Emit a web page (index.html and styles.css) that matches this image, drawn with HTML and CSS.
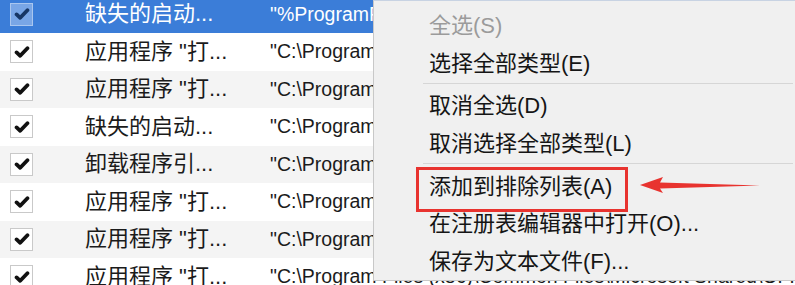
FILE: index.html
```html
<!DOCTYPE html>
<html lang="zh-CN">
<head>
<meta charset="utf-8">
<title>Context menu</title>
<link rel="stylesheet" href="styles.css">
</head>
<body>
<div class="screen">
  <div class="list">
    <div class="row selected">
      <span class="cb"><svg viewBox="0 0 16 16" width="16" height="16"><path d="M2.6 8.4 L6.2 11.8 L13.4 4.2" /></svg></span>
      <span class="name">缺失的启动...</span>
      <span class="cmd">"%ProgramFiles%\Common Files\System\uninstall.exe"</span>
    </div>
    <div class="row">
      <span class="cb"><svg viewBox="0 0 16 16" width="16" height="16"><path d="M2.6 8.4 L6.2 11.8 L13.4 4.2" /></svg></span>
      <span class="name">应用程序 "打...</span>
      <span class="cmd">"C:\Program Files (x86)\Common Files\app.exe"</span>
    </div>
    <div class="row alt">
      <span class="cb"><svg viewBox="0 0 16 16" width="16" height="16"><path d="M2.6 8.4 L6.2 11.8 L13.4 4.2" /></svg></span>
      <span class="name">应用程序 "打...</span>
      <span class="cmd">"C:\Program Files (x86)\Common Files\app.exe"</span>
    </div>
    <div class="row">
      <span class="cb"><svg viewBox="0 0 16 16" width="16" height="16"><path d="M2.6 8.4 L6.2 11.8 L13.4 4.2" /></svg></span>
      <span class="name">缺失的启动...</span>
      <span class="cmd">"C:\Program Files (x86)\Common Files\app.exe"</span>
    </div>
    <div class="row alt">
      <span class="cb"><svg viewBox="0 0 16 16" width="16" height="16"><path d="M2.6 8.4 L6.2 11.8 L13.4 4.2" /></svg></span>
      <span class="name">卸载程序引...</span>
      <span class="cmd">"C:\Program Files (x86)\Common Files\app.exe"</span>
    </div>
    <div class="row">
      <span class="cb"><svg viewBox="0 0 16 16" width="16" height="16"><path d="M2.6 8.4 L6.2 11.8 L13.4 4.2" /></svg></span>
      <span class="name">应用程序 "打...</span>
      <span class="cmd">"C:\Program Files (x86)\Common Files\app.exe"</span>
    </div>
    <div class="row alt">
      <span class="cb"><svg viewBox="0 0 16 16" width="16" height="16"><path d="M2.6 8.4 L6.2 11.8 L13.4 4.2" /></svg></span>
      <span class="name">应用程序 "打...</span>
      <span class="cmd">"C:\Program Files (x86)\Common Files\app.exe"</span>
    </div>
    <div class="row">
      <span class="cb"><svg viewBox="0 0 16 16" width="16" height="16"><path d="M2.6 8.4 L6.2 11.8 L13.4 4.2" /></svg></span>
      <span class="name">应用程序 "打...</span>
      <span class="cmd">"C:\Program Files (x86)\Common Files\Microsoft Shared\OFFICE16\app.exe"</span>
    </div>
  </div>

  <div class="menu">
    <div class="item disabled">全选(S)</div>
    <div class="item">选择全部类型(E)</div>
    <div class="sep"></div>
    <div class="item">取消全选(D)</div>
    <div class="item">取消选择全部类型(L)</div>
    <div class="sep"></div>
    <div class="item">添加到排除列表(A)</div>
    <div class="item">在注册表编辑器中打开(O)...</div>
    <div class="item">保存为文本文件(F)...</div>

    <div class="highlight"></div>
    <svg class="arrow" viewBox="0 0 130 20" width="130" height="20">
      <polygon points="0,9 23,1 20,6.5 120,9.5 20,12.5 23,17" fill="#e8332f" />
    </svg>
  </div>
</div>
</body>
</html>
```

FILE: styles.css
```css
* { box-sizing: border-box; }

html, body {
  margin: 0;
  padding: 0;
  width: 795px;
  height: 285px;
  overflow: hidden;
  background: #ffffff;
}

.screen {
  position: relative;
  width: 795px;
  height: 285px;
  overflow: hidden;
  font-family: "Liberation Sans", "Noto Sans CJK SC", sans-serif;
  font-size: 22px;
  color: #1b1b1b;
}

.list {
  display: flex;
  flex-direction: column;
  margin-top: -4.5px;
}

.row {
  display: flex;
  align-items: center;
  height: 37.5px;
  white-space: nowrap;
  background: #ffffff;
}

.row.alt { background: #f4f4f4; }

.row.selected {
  background: #3b7dd8;
  color: #ffffff;
}

.cb {
  flex: none;
  display: flex;
  align-items: center;
  justify-content: center;
  width: 23px;
  height: 23px;
  margin-left: 10px;
  border: 1px solid #c9c9c9;
  background: #ffffff;
}

.cb svg path {
  fill: none;
  stroke: #111111;
  stroke-width: 3.8;
  stroke-linecap: round;
  stroke-linejoin: round;
}

.selected .cb {
  background: #79a6e6;
  border-color: #a9c6ef;
}

.selected .cb svg path { stroke: #173665; }

.name {
  flex: none;
  width: 185px;
  margin-left: 52px;
  line-height: 1;
}

.cmd {
  flex: none;
  font-size: 19.5px;
  line-height: 1;
}

.menu {
  position: absolute;
  left: 373px;
  top: 0;
  width: 430px;
  height: 281px;
  padding-top: 6px;
  background: #f0f0f0;
  border-left: 1px solid #c8c8c8;
  border-top: 1px solid #c8d3e3;
  border-bottom: 1px solid #c8c8c8;
  display: flex;
  flex-direction: column;
}

.item {
  height: 37.5px;
  line-height: 37.5px;
  padding-left: 55px;
  color: #151515;
  white-space: nowrap;
}

.item.disabled { color: #9b9b9b; }

.sep {
  height: 6px;
  margin-left: 49px;
  margin-right: 10px;
  padding-top: 1px;
}

.sep::before {
  content: "";
  display: block;
  height: 1px;
  background: #d6d6d6;
}

.highlight {
  position: absolute;
  left: 42px;
  top: 166px;
  width: 212px;
  height: 45px;
  border: 3px solid #e8332f;
}

.arrow {
  position: absolute;
  left: 266px;
  top: 175px;
}
```
